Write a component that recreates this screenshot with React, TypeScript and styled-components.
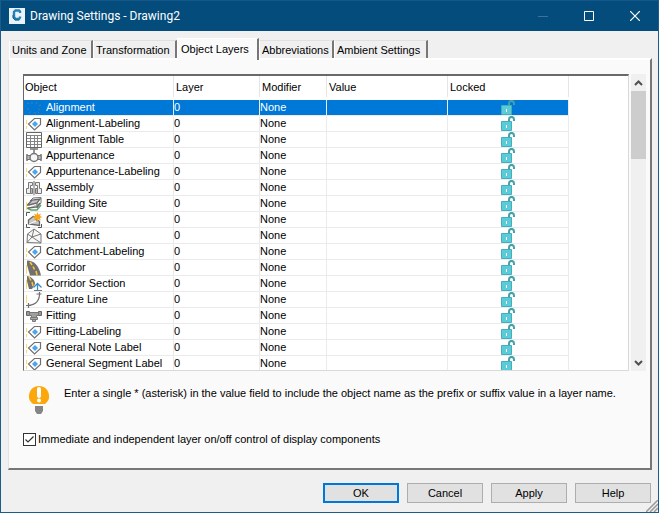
import React, { useState } from "react";
import styled, { createGlobalStyle, css } from "styled-components";

const GlobalStyle = createGlobalStyle`
  *, *::before, *::after { box-sizing: border-box; }
  html, body, #root { height: 100%; }
  body {
    margin: 0;
    font-family: "Liberation Sans", Arial, sans-serif;
    font-size: 11px;
    line-height: 16px;
    color: #000;
  }
  button, input { font: inherit; color: inherit; }
`;

const Dialog = styled.main`
  position: relative;
  display: flex;
  flex-direction: column;
  min-height: 100%;
  background: #f0f0f0;
  border: 1px solid #1b5c8a;
  border-top-color: #12568a;
`;

const TitleBar = styled.header`
  display: flex;
  align-items: center;
  height: 30px;
  padding-left: 8px;
  background: #034c7c;
  color: #fff;
`;

const AppIcon = styled.svg`
  width: 16px;
  height: 16px;
  flex: none;
`;

const Title = styled.h1`
  flex: 1;
  margin: 0 0 0 5px;
  font: 400 12px/16px Roboto, "Open Sans", sans-serif;
`;

const WindowButton = styled.button`
  display: flex;
  align-items: center;
  justify-content: center;
  width: 46px;
  height: 30px;
  padding: 0;
  border: 0;
  background: transparent;
`;

const Body = styled.div`
  flex: 1;
  display: flex;
  flex-direction: column;
  min-height: 0;
  padding: 7px 6px 9px 7px;
`;

const TabList = styled.div`
  display: flex;
  align-items: flex-end;
  height: 20px;
  padding-left: 1px;
`;

const Tab = styled.button<{ $width: number; $active: boolean }>`
  width: ${(p) => p.$width}px;
  height: 18px;
  padding: 0 0 0 2px;
  text-align: left;
  white-space: nowrap;
  background: #f0f0f0;
  border: solid;
  border-width: 1px 2px 0 1px;
  border-color: #e0e0e0 #777 #fff #fff;
  line-height: 16px;
  ${(p) =>
    p.$active &&
    css`
      position: relative;
      height: 22px;
      margin-bottom: -2px;
      padding: 0 0 2px 3px;
      background: #fafafa;
      border-top-color: #fff;
    `}
`;

const Panel = styled.section`
  flex: 1;
  display: flex;
  flex-direction: column;
  padding: 14px 4px 21px 14px;
  background: #fafafa;
  border: solid;
  border-width: 2px 2px 2px 1px;
  border-color: #fff #777 #777 #e3e3e3;
`;

const ListArea = styled.div`
  display: flex;
  flex: 1 1 297px;
  gap: 2px;
  max-height: 297px;
`;

const ListBox = styled.div`
  flex: 1;
  height: 297px;
  overflow: hidden;
  background: #fff;
  border: solid;
  border-width: 2px 1px 1px 1px;
  border-color: #696969 #d9d9d9 #d9d9d9 #696969;
`;

const Table = styled.table`
  width: 544px;
  table-layout: fixed;
  border-collapse: separate;
  border-spacing: 0;
`;

const Col = styled.col<{ $width: number }>`
  width: ${(p) => p.$width}px;
`;

const HeadCell = styled.th<{ $first?: boolean }>`
  height: 21px;
  padding: 0 0 0 ${(p) => (p.$first ? 1 : 2)}px;
  text-align: left;
  font-weight: 400;
  border-right: 1px solid #e5e5e5;
`;

const HeadGap = styled.tr`
  height: 3px;
`;

const GapCell = styled.td`
  padding: 0;
`;

const Row = styled.tr<{ $selected: boolean }>`
  height: 16px;
  ${(p) =>
    p.$selected &&
    css`
      background: #0078d7;
      color: #fff;
    `}
`;

const Cell = styled.td`
  height: 16px;
  padding: 0;
  line-height: 15px;
  white-space: nowrap;
  border: solid #ebebeb;
  border-width: 0 1px 1px 0;
`;

const ObjectLabel = styled.div`
  display: flex;
  align-items: center;
  gap: 4px;
  height: 15px;
  padding-left: 2px;
`;

const RowIcon = styled.svg`
  width: 16px;
  height: 16px;
  flex: none;
  overflow: visible;
`;

const LockHolder = styled.div`
  display: flex;
  justify-content: center;
  height: 15px;
`;

const LockIcon = styled.svg`
  width: 14px;
  height: 15px;
`;

const ScrollBar = styled.div`
  display: flex;
  flex-direction: column;
  width: 15px;
  background: #f0f0f0;
`;

const ScrollButton = styled.button`
  display: flex;
  align-items: center;
  justify-content: center;
  height: 17px;
  padding: 0;
  border: 0;
  background: transparent;
`;

const ScrollTrack = styled.div`
  flex: 1;
`;

const ScrollThumb = styled.div`
  height: 68px;
  background: #cdcdcd;
`;

const Hint = styled.div`
  display: flex;
  align-items: flex-start;
  gap: 14px;
  margin-top: 14px;
  padding-left: 5px;
`;

const HintIcon = styled.svg`
  width: 22px;
  height: 30px;
  flex: none;
`;

const HintText = styled.p`
  margin: 0;
`;

const CheckLabel = styled.label`
  display: flex;
  align-items: center;
  gap: 2px;
  margin-top: 16px;
`;

const CheckBox = styled.input`
  appearance: none;
  width: 13px;
  height: 13px;
  margin: 0;
  border: 1px solid #333;
  background: #fff;
  &:checked {
    background: #fff
      url("data:image/svg+xml,%3Csvg xmlns='http://www.w3.org/2000/svg' viewBox='0 0 11 11'%3E%3Cpath d='M1.5 5.5 4 8 9.5 2.5' fill='none' stroke='%23333' stroke-width='1.2'/%3E%3C/svg%3E");
  }
`;

const Footer = styled.footer`
  display: flex;
  justify-content: flex-end;
  gap: 8px;
  padding: 13px 1px 0 0;
`;

const PushButton = styled.button<{ $default?: boolean }>`
  width: 76px;
  height: 20px;
  padding: 0;
  background: #e1e1e1;
  border: ${(p) => (p.$default ? "2px solid #0078d7" : "1px solid #adadad")};
  line-height: 16px;
`;

const Grip = styled.svg`
  position: absolute;
  right: 0;
  bottom: 0;
  width: 12px;
  height: 12px;
`;

type IconName =
  | "alignment" | "label" | "table" | "valve" | "assembly" | "building" | "cant"
  | "catchment" | "corridor" | "section" | "feature" | "fitting";

const drawings: Record<IconName, React.ReactNode> = {
  alignment: (
    <g stroke="#5d7893" fill="none">
      <path d="M1 3l3 1M6 2v3M11 2l-1 3M15 5l-3 1M1 9h3M12 9l3 1M3 13l2-2M9 14v-3M13 13l-2-2" strokeDasharray="2 1" />
    </g>
  ),
  label: (
    <>
      <path d="M.5 4v9" stroke="#ffd76b" strokeDasharray="4 2" />
      <path d="M8.500 2.500h6v6L8.500 14 2.500 8z" fill="#fff" stroke="#707070" strokeWidth="1.200" />
      <path d="M9 5l3 3-3 3-3-3z" fill="#4aa5ef" />
    </>
  ),
  table: (
    <>
      <path d="M.5.5h15v15H.5z" fill="#fff" stroke="#666" />
      <path d="M1 3.500h14M1 6.500h14M1 9.500h14M1 12.500h14M4.500 3v12M8.500 3v12M11.500 3v12" stroke="#858585" fill="none" />
    </>
  ),
  valve: (
    <>
      <path d="M4 1h8M8 1v4M1 6v7M15 6v7" stroke="#777" strokeWidth="1.500" fill="none" />
      <path d="M1 7.500h14v4H1z" fill="#bbb" stroke="#777" />
      <circle cx="8" cy="9.500" r="4" fill="#f7f7f7" stroke="#777" strokeWidth="1.500" />
    </>
  ),
  assembly: (
    <>
      <path d="M.5 8.500h2v-6h4v3h-2v8h-4zM15.500 8.500h-2v-6h-4v3h2v8h4z" fill="#eee" stroke="#777" />
      <path d="M8 1v14" stroke="#666" />
      <path d="M4.500 8.500h2v5h-2zM9.500 8.500h2v5h-2z" fill="#b5b5b5" stroke="#777" />
    </>
  ),
  building: (
    <>
      <path d="M1 12l4 2h6l4-5" fill="none" stroke="#57a773" strokeWidth="1.500" />
      <path d="M1.500 9L6 4l8-1-3 4-8 2zM2 12l9-1 3-4" fill="#c5c5c5" stroke="#666" strokeWidth="1.300" />
      <path d="M4 5l3-3 8-.5V7l-4 5V7" fill="none" stroke="#707070" />
      <path d="M.5 6v8" stroke="#ffd76b" />
    </>
  ),
  cant: (
    <>
      <path d="M.5 4V.5H4M.5 12v3.500H4M12 15.500h3.500V12" fill="none" stroke="#555" />
      <path d="M2.500 12V8L7 4.500c2-.5 2.500 1.500 3 3l3.500 2v4z" fill="#c7c7c7" stroke="#666" strokeWidth="1.300" />
      <path d="M3 12l7-3" stroke="#fff" />
      <path d="M11.500 0l1 2.700L15 1.500 13.900 4l2.600 1-2.600 1 1.100 2.500-2.500-1.200-1 2.700-1-2.700L8 8.500 9.100 6 6.500 5l2.600-1L8 1.500l2.500 1.200z" fill="#f6a51b" />
    </>
  ),
  catchment: (
    <path d="M8 1L1.500 6 1 14.500 15 15V6zM1.500 6L6 9l9-3M8 1L6 9l-5 5.500M6 9l9 6" fill="#f7f7f7" stroke="#777" />
  ),
  corridor: (
    <>
      <path d="M1 .5c7 0 12 5 14 15H4L1 5z" fill="#707070" />
      <path d="M4 2l2 3M7 6.500l1.500 3M10 11l1 4" stroke="#ffc52f" strokeWidth="1.600" />
      <path d="M.5 5v9" stroke="#ffd76b" />
    </>
  ),
  section: (
    <>
      <path d="M1 0c5 1 8 4 8 8l-3 5H3L1 5z" fill="#707070" />
      <path d="M3 1l2 3.500M6 6l1 4" stroke="#ffc52f" strokeWidth="1.500" />
      <path d="M.5 4v9" stroke="#ffd76b" />
      <path d="M11.500 15V8M7.500 11.500l4-4 4 4" fill="none" stroke="#378cca" strokeWidth="1.300" />
      <path d="M8 14.500h8" stroke="#777" />
    </>
  ),
  feature: (
    <>
      <path d="M13.500 0c.5 8-3 13-12 13.500M10.500 2h5M2.500 11v5M0 13.500h5" fill="none" stroke="#707070" strokeWidth="1.200" />
      <path d="M.5 3v8" stroke="#ffd76b" />
    </>
  ),
  fitting: (
    <>
      <path d="M.5 3.500h3v4h-3zM12.500 3.500h3v4h-3z" fill="#999" stroke="#666" />
      <path d="M3.500 4.500h9v3h-2v2h-5v-2h-2z" fill="#a0a0a0" stroke="#777" />
      <path d="M4.500 9.500h7v2h-7zM6.500 11.500h3v2h-3z" fill="#aaa" stroke="#777" />
    </>
  ),
};

const objects: { name: string; icon: IconName }[] = [
  { name: "Alignment", icon: "alignment" },
  { name: "Alignment-Labeling", icon: "label" },
  { name: "Alignment Table", icon: "table" },
  { name: "Appurtenance", icon: "valve" },
  { name: "Appurtenance-Labeling", icon: "label" },
  { name: "Assembly", icon: "assembly" },
  { name: "Building Site", icon: "building" },
  { name: "Cant View", icon: "cant" },
  { name: "Catchment", icon: "catchment" },
  { name: "Catchment-Labeling", icon: "label" },
  { name: "Corridor", icon: "corridor" },
  { name: "Corridor Section", icon: "section" },
  { name: "Feature Line", icon: "feature" },
  { name: "Fitting", icon: "fitting" },
  { name: "Fitting-Labeling", icon: "label" },
  { name: "General Note Label", icon: "label" },
  { name: "General Segment Label", icon: "label" },
];

const tabs = [
  { name: "Units and Zone", width: 84 },
  { name: "Transformation", width: 84 },
  { name: "Object Layers", width: 82 },
  { name: "Abbreviations", width: 75 },
  { name: "Ambient Settings", width: 94 },
];

const columns = [
  { name: "Object", width: 150 },
  { name: "Layer", width: 86 },
  { name: "Modifier", width: 67 },
  { name: "Value", width: 121 },
  { name: "Locked", width: 121 },
];

function OpenLock() {
  return (
    <LockIcon viewBox="0 0 14 15" role="img" aria-label="Unlocked">
      <path d="M8 7V3.500C8 0 13 0 13 3.500V5" fill="none" stroke="#45a0ad" strokeWidth="2" />
      <path d="M.5 5.500h10v9H.5z" fill="#5bcbd8" stroke="#43aebc" />
      <path d="M5.500 9v3" stroke="#fff" />
    </LockIcon>
  );
}

export default function App() {
  const [tab, setTab] = useState("Object Layers");
  const [selected, setSelected] = useState("Alignment");
  return (
    <>
      <GlobalStyle />
      <Dialog>
        <TitleBar>
          <AppIcon viewBox="0 0 16 16" aria-hidden="true">
            <path d="M0 0h16v16H0z" fill="#e9f3fa" />
            <path d="M11 5V3.500L10 2.500H6.500L5 4v5l1.500 2H10l1-1.500V8.500" fill="none" stroke="#2383b8" strokeWidth="2.400" />
            <path d="M4 7v3l2 2h4" fill="none" stroke="#135f91" />
          </AppIcon>
          <Title>Drawing Settings - Drawing2</Title>
          <WindowButton aria-label="Minimize" disabled>
            <svg width="10" height="10"><path d="M0 5.500h10" stroke="#3d7397" /></svg>
          </WindowButton>
          <WindowButton aria-label="Maximize">
            <svg width="10" height="10"><path d="M.5.5h9v9h-9z" fill="none" stroke="#fff" /></svg>
          </WindowButton>
          <WindowButton aria-label="Close">
            <svg width="10" height="10"><path d="M0 0l10 10M10 0L0 10" stroke="#fff" strokeWidth="1.200" /></svg>
          </WindowButton>
        </TitleBar>
        <Body>
          <TabList role="tablist">
            {tabs.map((t) => (
              <Tab
                key={t.name}
                role="tab"
                aria-selected={tab === t.name}
                $active={tab === t.name}
                $width={t.width}
                onClick={() => setTab(t.name)}
              >
                {t.name}
              </Tab>
            ))}
          </TabList>
          <Panel>
            <ListArea>
              <ListBox>
                <Table>
                  <colgroup>
                    {columns.map((c) => <Col key={c.name} $width={c.width} />)}
                  </colgroup>
                  <thead>
                    <tr>
                      {columns.map((c, i) => <HeadCell key={c.name} $first={i === 0}>{c.name}</HeadCell>)}
                    </tr>
                    <HeadGap><GapCell colSpan={5} /></HeadGap>
                  </thead>
                  <tbody>
                    {objects.map((o) => (
                      <Row key={o.name} $selected={selected === o.name} onClick={() => setSelected(o.name)}>
                        <Cell>
                          <ObjectLabel>
                            <RowIcon viewBox="0 0 16 16" aria-hidden="true">{drawings[o.icon]}</RowIcon>
                            {o.name}
                          </ObjectLabel>
                        </Cell>
                        <Cell>0</Cell>
                        <Cell>None</Cell>
                        <Cell />
                        <Cell><LockHolder><OpenLock /></LockHolder></Cell>
                      </Row>
                    ))}
                  </tbody>
                </Table>
              </ListBox>
              <ScrollBar>
                <ScrollButton aria-label="Scroll up">
                  <svg width="9" height="6"><path d="M1 5l3.500-3.500L8 5" fill="none" stroke="#505050" strokeWidth="2" /></svg>
                </ScrollButton>
                <ScrollTrack><ScrollThumb /></ScrollTrack>
                <ScrollButton aria-label="Scroll down">
                  <svg width="9" height="6"><path d="M1 1l3.500 3.500L8 1" fill="none" stroke="#505050" strokeWidth="2" /></svg>
                </ScrollButton>
              </ScrollBar>
            </ListArea>
            <Hint>
              <HintIcon viewBox="0 0 22 30" aria-hidden="true">
                <path d="M11 1a10 10 0 0 0-6 18h12A10 10 0 0 0 11 1z" fill="#fca70b" />
                <path d="M7 21h8v5l-2 3H9l-2-3z" fill="#858585" />
                <path d="M11 4v7" stroke="#fff" strokeWidth="4" strokeLinecap="round" />
                <circle cx="11" cy="15.500" r="2" fill="#fff" />
              </HintIcon>
              <HintText>
                Enter a single * (asterisk) in the value field to include the object name as the prefix or suffix value in a layer name.
              </HintText>
            </Hint>
            <CheckLabel>
              <CheckBox type="checkbox" defaultChecked />
              Immediate and independent layer on/off control of display components
            </CheckLabel>
          </Panel>
          <Footer>
            <PushButton $default>OK</PushButton>
            <PushButton>Cancel</PushButton>
            <PushButton>Apply</PushButton>
            <PushButton>Help</PushButton>
          </Footer>
        </Body>
        <Grip viewBox="0 0 12 12" aria-hidden="true">
          <path d="M0 12L12 0M4 12l8-8M8 12l4-4" stroke="#999" strokeWidth="1.500" />
        </Grip>
      </Dialog>
    </>
  );
}
